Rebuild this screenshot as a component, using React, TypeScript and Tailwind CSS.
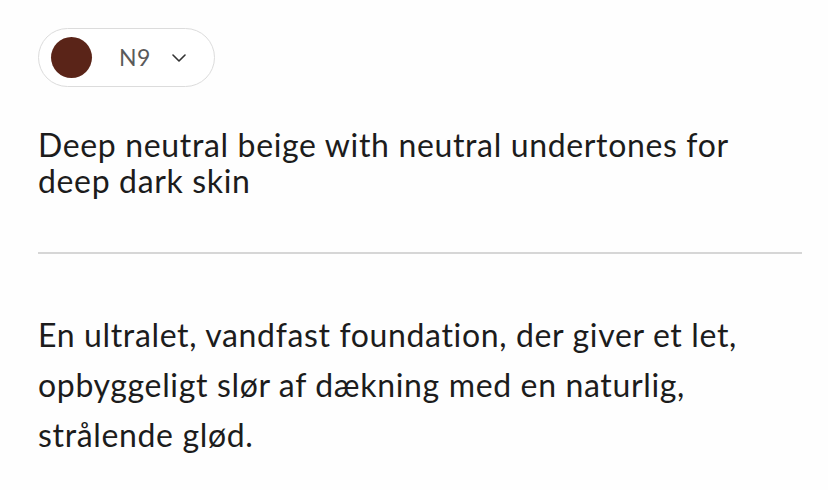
import React from "react";

export default function App() {
  return (
    <div className="min-h-[490px] w-[828px] bg-[#fefefe] text-[#1c1c1c]" style={{ fontFamily: "Lato, 'Noto Sans', sans-serif" }}>
      <div className="px-[38px] pt-[28px]">
        <button className="flex h-[59px] w-[177px] items-center rounded-full border border-[#dcdcdc] bg-white pl-[12px]">
          <span className="h-[41px] w-[41px] rounded-full bg-[#5a2418]" />
          <span className="ml-[27px] text-[23px] leading-none tracking-[0.5px] text-[#5a5a5a]">N9</span>
          <svg className="ml-[21px]" width="14" height="8" viewBox="0 0 14 8" fill="none">
            <path d="M1 1l6 6 6-6" stroke="#333" strokeWidth="1.6" strokeLinecap="round" strokeLinejoin="round" />
          </svg>
        </button>
        <p className="mt-[40px] text-[32px] leading-[36px] tracking-[0.65px]">
          Deep neutral beige with neutral undertones for
          <br />
          deep dark skin
        </p>
        <div className="mt-[53px] h-[2px] w-[764px] bg-[#d6d6d6]" />
        <p className="mt-[56px] text-[32px] leading-[50px] tracking-[0.65px]">
          En ultralet, vandfast foundation, der giver et let,
          <br />
          opbyggeligt slør af dækning med en naturlig,
          <br />
          strålende glød.
        </p>
      </div>
    </div>
  );
}
